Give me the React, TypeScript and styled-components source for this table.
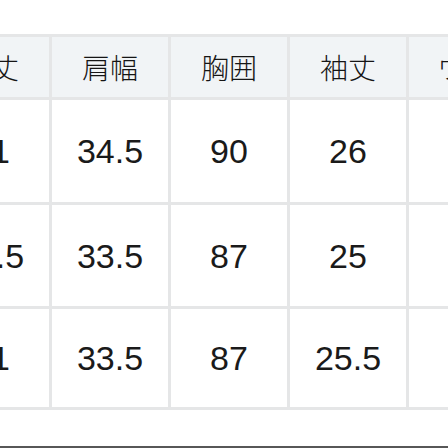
import styled, { createGlobalStyle } from "styled-components"

const GlobalStyle = createGlobalStyle`
  html, body {
    margin: 0;
    padding: 0;
    background: #ffffff;
    overflow: hidden;
  }
`

const headers = ["着丈", "肩幅", "胸囲", "袖丈", "ウエスト"]

const rows = [
  ["71", "34.5", "90", "26", ""],
  ["65.5", "33.5", "87", "25", ""],
  ["71", "33.5", "87", "25.5", ""],
]

export default function App() {
  return (
    <>
      <GlobalStyle />
      <Page>
        <SizeTable>
          {headers.map((h) => (
            <HeaderCell key={h}>{h}</HeaderCell>
          ))}
          {rows.map((row, i) =>
            row.map((value, j) => <Cell key={`${i}-${j}`}>{value}</Cell>)
          )}
        </SizeTable>
        <BottomRule />
      </Page>
    </>
  )
}

const Page = styled.div`
  width: 448px;
  height: 448px;
  overflow: hidden;
  display: flex;
  flex-direction: column;
`

const SizeTable = styled.div`
  display: grid;
  grid-template-columns: repeat(4, 116px) 168px;
  grid-template-rows: 60px 102px 101px 98px;
  gap: 3px;
  padding: 3px 0;
  margin: 34px 0 0 -67px;
  width: max-content;
  background: #e5e6e7;
`

const HeaderCell = styled.div`
  display: flex;
  align-items: center;
  justify-content: center;
  background: #f1f4f6;
  color: #151515;
  font-family: "Noto Sans CJK JP", "Noto Sans", sans-serif;
  font-size: 28px;
  font-weight: 300;
  line-height: 1;
`

const Cell = styled.div`
  display: flex;
  align-items: center;
  justify-content: center;
  background: #ffffff;
  color: #1a1a1a;
  font-family: "Liberation Sans", Arial, sans-serif;
  font-size: 34px;
  line-height: 1;
`

const BottomRule = styled.div`
  margin-top: auto;
  height: 2px;
  background: #575757;
`
